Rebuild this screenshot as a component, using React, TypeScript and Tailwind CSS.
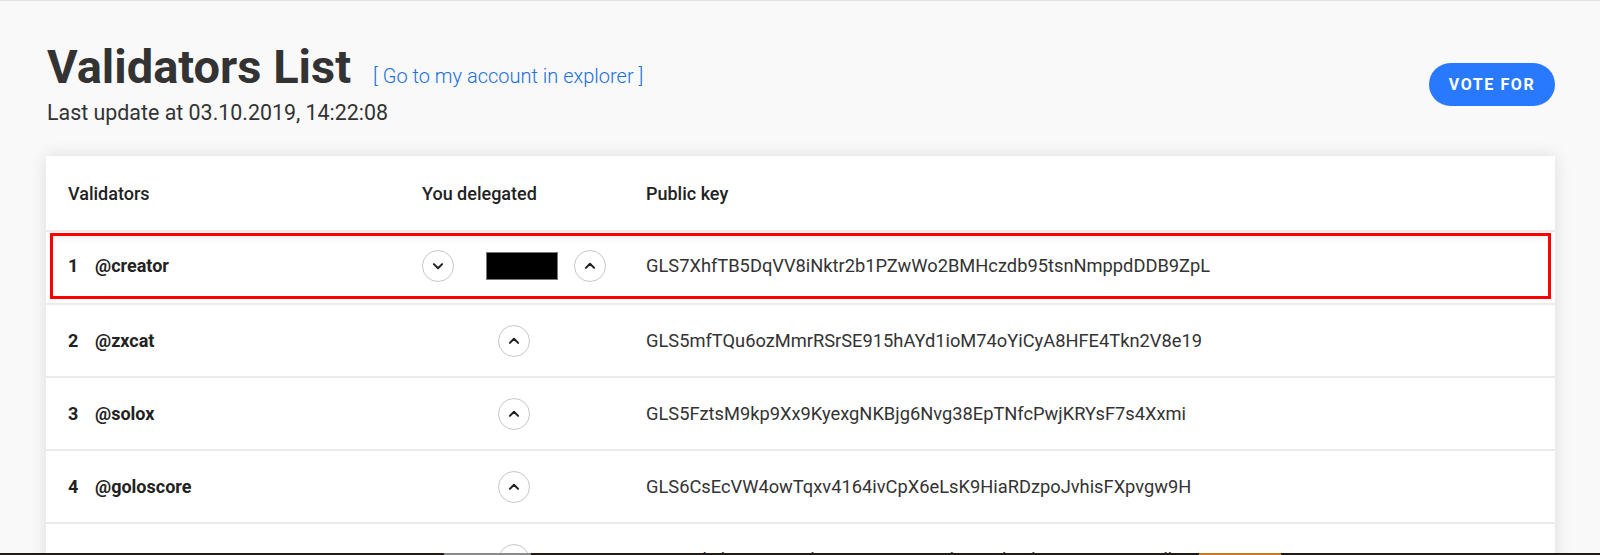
import React from 'react'

type Validator = {
  name: string
  publicKey: string
  delegated?: boolean
}

const validators: Validator[] = [
  { name: '@creator', publicKey: 'GLS7XhfTB5DqVV8iNktr2b1PZwWo2BMHczdb95tsnNmppdDDB9ZpL', delegated: true },
  { name: '@zxcat', publicKey: 'GLS5mfTQu6ozMmrRSrSE915hAYd1ioM74oYiCyA8HFE4Tkn2V8e19' },
  { name: '@solox', publicKey: 'GLS5FztsM9kp9Xx9KyexgNKBjg6Nvg38EpTNfcPwjKRYsF7s4Xxmi' },
  { name: '@goloscore', publicKey: 'GLS6CsEcVW4owTqxv4164ivCpX6eLsK9HiaRDzpoJvhisFXpvgw9H' },
  { name: '@arcange', publicKey: 'GLS7NkzhW9FLSmd9o181MTzwHoBbe3md9i6k8NKWwnuMMdbSMrwHx' },
]

function Chevron({ up }: { up?: boolean }) {
  return (
    <svg width="18" height="18" viewBox="0 0 24 24" fill="none">
      <path
        d={up ? 'M6.5 14.5l5.5-5.5 5.5 5.5' : 'M6.5 9.5l5.5 5.5 5.5-5.5'}
        stroke="#1f1f1f"
        strokeWidth="2.6"
        strokeLinecap="round"
        strokeLinejoin="round"
      />
    </svg>
  )
}

function RoundButton({ up }: { up?: boolean }) {
  return (
    <button className="w-8 h-8 rounded-full border-[1.5px] border-[#c8c8c8] bg-white flex items-center justify-center">
      <Chevron up={up} />
    </button>
  )
}

export default function App() {
  return (
    <div className="relative h-[555px] overflow-hidden bg-[#f9f9f9] border-t border-[#e4e4e4] font-[Roboto,sans-serif] text-[#333]">
      <div className="pl-[47px] pr-[45px] pt-[42px]">
        {/* Page header */}
        <div className="flex justify-between items-start">
          <div>
            <div className="flex items-baseline gap-[22px]">
              <h1 className="text-[47px] leading-[47px] font-bold text-[#333]">Validators List</h1>
              <a href="#" className="text-[20px] font-light text-[#1a6fdc]">
                [ Go to my account in explorer ]
              </a>
            </div>
            <p className="mt-[10px] text-[21.4px] leading-[24px] text-[#333]">Last update at 03.10.2019, 14:22:08</p>
          </div>
          <button className="mt-[20px] h-[43px] w-[126px] rounded-full bg-[#2979ff] text-white text-[16px] font-bold tracking-[0.1em]">
            VOTE FOR
          </button>
        </div>

        {/* Table */}
        <div className="-ml-px mt-[31px] bg-white shadow-[0_0_16px_rgba(0,0,0,0.12)]">
          <div className="h-[74px] flex items-center pl-[22px] text-[18px] font-medium text-[#222]">
            <div className="w-[354px]">Validators</div>
            <div className="w-[224px]">You delegated</div>
            <div>Public key</div>
          </div>

          {validators.map((v, i) => (
            <div
              key={v.name}
              className={`relative h-[73px] border-t-2 border-[#ebebeb] flex items-center pl-[22px] ${v.delegated ? 'pb-[4px]' : ''}`}
            >
              <div className="w-[354px] flex items-center text-[18px] font-bold text-[#222]">
                <span className="w-[27px]">{i + 1}</span>
                <span>{v.name}</span>
              </div>
              <div className="w-[224px]">
                {v.delegated ? (
                  <div className="w-[184px] flex items-center">
                    <RoundButton />
                    <div className="ml-[32px] w-[72px] h-[28px] bg-black border border-[#777]" />
                    <div className="ml-[16px]">
                      <RoundButton up />
                    </div>
                  </div>
                ) : (
                  <div className="w-[184px] flex justify-center">
                    <RoundButton up />
                  </div>
                )}
              </div>
              <div className="text-[18.3px] text-[#333]">{v.publicKey}</div>

              {v.delegated && (
                <div className="absolute left-[4px] right-[4px] top-[1px] bottom-[4px] border-[3px] border-[#ff0000] shadow-[inset_0_6px_8px_-6px_rgba(0,0,0,0.12)]" />
              )}
            </div>
          ))}
        </div>
      </div>

      {/* taskbar edge at the bottom of the capture */}
      <div className="absolute left-0 right-0 bottom-0 h-[2px] bg-[#231a17] flex">
        <div className="ml-[444px] w-[87px] bg-[#8a8a8a]" />
        <div className="ml-[668px] w-[82px] bg-[#c07a2a]" />
      </div>
    </div>
  )
}
